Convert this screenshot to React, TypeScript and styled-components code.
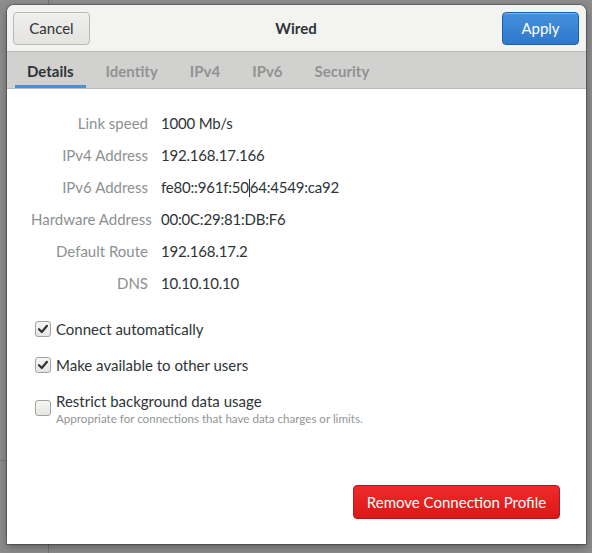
import React from "react";
import styled, { createGlobalStyle } from "styled-components";

const GlobalStyle = createGlobalStyle`
  html, body {
    margin: 0;
    padding: 0;
  }
  body {
    width: 592px;
    height: 553px;
    overflow: hidden;
    background-color: #8c8c8c;
    background-image:
      linear-gradient(#737373, #737373),
      linear-gradient(#737373, #737373),
      linear-gradient(#737373, #737373);
    background-size: 1px 6px, 48px 1px, 1px 10px;
    background-position: 48px 0, 0 460px, 48px 544px;
    background-repeat: no-repeat;
    font-family: Lato, "Noto Sans", sans-serif;
    color: #2e3436;
  }
  #root {
    padding: 5px 0 0 7px;
  }
`;

const Dialog = styled.div`
  width: 579px;
  height: 539px;
  display: flex;
  flex-direction: column;
  background: #ffffff;
  border-radius: 7px 7px 0 0;
  box-shadow: 0 0 0 1px rgba(0, 0, 0, 0.25), 0 3px 9px rgba(0, 0, 0, 0.35);
  overflow: hidden;
`;

const HeaderBar = styled.div`
  height: 46px;
  flex-shrink: 0;
  display: flex;
  align-items: center;
  justify-content: space-between;
  padding: 0 7px 0 6px;
  background: #f3f3f2;
  border-bottom: 1px solid #b9b9b6;
`;

const Title = styled.div`
  font-size: 15px;
  font-weight: 700;
  color: #2e3436;
`;

const HeaderButton = styled.button<{ $primary?: boolean }>`
  width: 77px;
  height: 33px;
  border-radius: 4px;
  font-family: inherit;
  font-size: 15px;
  border: 1px solid ${(p) => (p.$primary ? "#1b5fa8" : "#b7b7b3")};
  color: ${(p) => (p.$primary ? "#ffffff" : "#2e3436")};
  background: ${(p) =>
    p.$primary
      ? "linear-gradient(#4590dd, #2f78cb)"
      : "linear-gradient(#efefed, #e4e3e0)"};
  box-shadow: inset 0 1px rgba(255, 255, 255, 0.3);
  padding: 0;
`;

const Tabs = styled.div`
  height: 36px;
  flex-shrink: 0;
  display: flex;
  gap: 8px;
  padding: 0 0 0 8px;
  background: #d1d1cf;
  border-bottom: 1px solid #b9b9b6;
`;

const Tab = styled.div<{ $active?: boolean }>`
  display: flex;
  align-items: center;
  padding: 2px 12px 0;
  font-size: 15px;
  font-weight: 700;
  color: ${(p) => (p.$active ? "#2e3436" : "#919393")};
  box-shadow: ${(p) => (p.$active ? "inset 0 -3px #4a90d9" : "none")};
`;

const Body = styled.div`
  flex: 1;
  display: flex;
  flex-direction: column;
  padding: 18px 26px 25px 24px;
`;

const InfoGrid = styled.div`
  display: grid;
  grid-template-columns: 117px auto;
  grid-auto-rows: 32px;
  column-gap: 13px;
  align-items: center;
  font-size: 15px;
  white-space: nowrap;
`;

const Label = styled.div`
  text-align: right;
  color: #8d9091;
`;

const Value = styled.div`
  color: #2e3436;
  letter-spacing: -0.2px;
`;

const Caret = styled.span`
  display: inline-block;
  width: 1px;
  height: 18px;
  background: #2e3436;
  vertical-align: -4px;
`;

const Options = styled.div`
  display: flex;
  flex-direction: column;
  gap: 12px;
  margin-top: 18px;
  padding-left: 4px;
`;

const Option = styled.label`
  display: flex;
  align-items: center;
  gap: 5px;
  min-height: 24px;
  font-size: 15px;
  color: #2e3436;
`;

const Box = styled.span`
  width: 14px;
  height: 14px;
  flex-shrink: 0;
  border: 1px solid #a2a29f;
  border-radius: 3px;
  background: linear-gradient(#f6f6f5, #e6e5e3);
  display: flex;
  align-items: center;
  justify-content: center;
`;

const OptionText = styled.div`
  display: flex;
  flex-direction: column;
  line-height: 18px;
  padding-top: 3px;
`;

const Hint = styled.div`
  font-size: 11.6px;
  line-height: 17px;
  color: #929595;
`;

const Footer = styled.div`
  margin-top: auto;
  display: flex;
  justify-content: flex-end;
`;

const DangerButton = styled.button`
  width: 207px;
  height: 34px;
  border-radius: 4px;
  border: 1px solid #b2161d;
  background: linear-gradient(#ee2a2a, #dc1717);
  color: #ffffff;
  font-family: inherit;
  font-size: 15px;
  padding: 0;
`;

const Check = () => (
  <svg width="12" height="12" viewBox="0 0 12 12">
    <path
      d="M2 6.2 L4.8 9 L10 2.8"
      fill="none"
      stroke="#2e3436"
      strokeWidth="2.2"
      strokeLinecap="round"
      strokeLinejoin="round"
    />
  </svg>
);

const rows: [string, React.ReactNode][] = [
  ["Link speed", "1000 Mb/s"],
  ["IPv4 Address", "192.168.17.166"],
  [
    "IPv6 Address",
    <>
      fe80::961f:50
      <Caret />
      64:4549:ca92
    </>,
  ],
  ["Hardware Address", "00:0C:29:81:DB:F6"],
  ["Default Route", "192.168.17.2"],
  ["DNS", "10.10.10.10"],
];

export default function App() {
  return (
    <>
      <GlobalStyle />
      <Dialog>
        <HeaderBar>
          <HeaderButton>Cancel</HeaderButton>
          <Title>Wired</Title>
          <HeaderButton $primary>Apply</HeaderButton>
        </HeaderBar>
        <Tabs>
          <Tab $active>Details</Tab>
          <Tab>Identity</Tab>
          <Tab>IPv4</Tab>
          <Tab>IPv6</Tab>
          <Tab>Security</Tab>
        </Tabs>
        <Body>
          <InfoGrid>
            {rows.map(([label, value]) => (
              <React.Fragment key={label}>
                <Label>{label}</Label>
                <Value>{value}</Value>
              </React.Fragment>
            ))}
          </InfoGrid>
          <Options>
            <Option>
              <Box>
                <Check />
              </Box>
              Connect automatically
            </Option>
            <Option>
              <Box>
                <Check />
              </Box>
              Make available to other users
            </Option>
            <Option>
              <Box />
              <OptionText>
                Restrict background data usage
                <Hint>Appropriate for connections that have data charges or limits.</Hint>
              </OptionText>
            </Option>
          </Options>
          <Footer>
            <DangerButton>Remove Connection Profile</DangerButton>
          </Footer>
        </Body>
      </Dialog>
    </>
  );
}
